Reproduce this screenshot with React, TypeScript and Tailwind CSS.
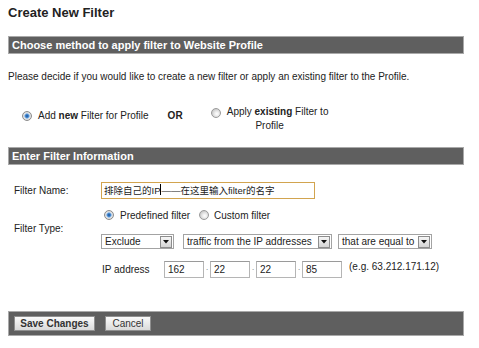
import React from "react";

const Radio = ({ checked }: { checked?: boolean }) =>
  checked ? (
    <span className="inline-block w-[10px] h-[10px] shrink-0 rounded-full border border-[#8c8c8c] bg-[radial-gradient(circle,#1b4f8f_0,#3f83cc_1.5px,#9ec3ea_2.5px,#e6e6e6_3px,#cfcfcf_5px)] align-[-1px]" />
  ) : (
    <span className="inline-block w-[10px] h-[10px] shrink-0 rounded-full border border-[#9a9a9a] bg-[radial-gradient(circle_at_60%_60%,#ffffff_0,#eeeeee_2px,#cacaca_5px)] align-[-1px]" />
  );

const DropButton = () => (
  <span className="ml-auto mr-px w-[12px] h-[12px] border border-[#8d8d8d] bg-gradient-to-b from-[#f6f6f6] to-[#d4d4d4] flex items-center justify-center">
    <svg width="6" height="4" viewBox="0 0 6 4">
      <path d="M0 0h6L3 3.5z" fill="#111" />
    </svg>
  </span>
);

const Select = ({ value, width }: { value: string; width: string }) => (
  <div className={`${width} h-[15px] border border-[#a3a3a3] bg-white flex items-center pl-[3px] text-[#222]`}>
    <span className="leading-[13px] whitespace-nowrap">{value}</span>
    <DropButton />
  </div>
);

const IpBox = ({ value }: { value: string }) => (
  <div className="w-[40px] h-[17px] border border-[#b5b5b5] border-t-[#9a9a9a] bg-white pl-[3px] leading-[15px]">
    {value}
  </div>
);

const Dot = () => <span className="w-[6px] text-center text-[8px] text-[#666] leading-[17px]">·</span>;

const SectionBar = ({ children, className = "" }: { children: React.ReactNode; className?: string }) => (
  <div className={`h-[18px] bg-[#5f5f5f] border border-[#a9a9a9] text-white font-bold text-[11px] leading-[16px] pl-[3px] ${className}`}>
    {children}
  </div>
);

export default function App() {
  return (
    <div className="w-[479px] h-[348px] bg-white overflow-hidden font-['Liberation_Sans',Arial,'Noto_Sans_CJK_SC',sans-serif] text-[10px] text-[#222]">
      <div className="w-[456px] ml-[8px] pt-[5px]">
        <h1 className="text-[13px] leading-[16px] font-bold text-[#222]">Create New Filter</h1>

        <SectionBar className="mt-[15px]">Choose method to apply filter to Website Profile</SectionBar>

        <p className="mt-[17px] leading-[12px]">
          Please decide if you would like to create a new filter or apply an existing filter to the Profile.
        </p>

        <div className="mt-[23px] flex items-start pl-[14px] leading-[12px]">
          <div className="mt-[4px] flex items-center gap-[6px]">
            <Radio checked />
            <span>
              Add <b>new</b> Filter for Profile
            </span>
          </div>
          <b className="mt-[4px] ml-[19px]">OR</b>
          <div className="ml-[28px] w-[118px] text-center whitespace-nowrap">
            <span className="mr-[6px] inline-block align-[-2px]">
              <Radio />
            </span>
            Apply <b>existing</b> Filter to
            <br />
            Profile
          </div>
        </div>

        <SectionBar className="mt-[15px]">Enter Filter Information</SectionBar>

        <div className="pl-[6px]">
          <div className="mt-[17px] flex items-center">
            <span className="w-[87px]">Filter Name:</span>
            <div className="w-[214px] h-[17px] border border-[#d2a44f] bg-white pl-[2px] leading-[15px] whitespace-nowrap text-[9.5px] font-['Liberation_Sans','Noto_Sans_CJK_SC',sans-serif]">
              排除自己的IP<span className="inline-block w-px h-[11px] bg-black align-[-1px]" />——在这里输入filter的名字
            </div>
          </div>

          <div className="mt-[9px] flex items-center">
            <span className="w-[87px]">Filter Type:</span>
            <div className="flex flex-col gap-[12px]">
              <div className="h-[14px] flex items-center pl-[3px]">
                <Radio checked />
                <span className="ml-[6px]">Predefined filter</span>
                <span className="ml-[9px]">
                  <Radio />
                </span>
                <span className="ml-[5px]">Custom filter</span>
              </div>
              <div className="flex items-center">
                <Select value="Exclude" width="w-[73px]" />
                <div className="w-[9px]" />
                <Select value="traffic from the IP addresses" width="w-[149px]" />
                <div className="w-[6px]" />
                <Select value="that are equal to" width="w-[94px]" />
              </div>
            </div>
          </div>

          <div className="mt-[12px] ml-[88px] flex items-start">
            <span className="w-[62px] leading-[17px]">IP address</span>
            <IpBox value="162" />
            <Dot />
            <IpBox value="22" />
            <Dot />
            <IpBox value="22" />
            <Dot />
            <IpBox value="85" />
            <span className="ml-[7px] leading-[12px]">(e.g. 63.212.171.12)</span>
          </div>
        </div>

        <div className="mt-[33px] h-[25px] bg-[#5f5f5f] border border-[#a9a9a9] flex items-center pl-[5px] gap-[10px]">
          <button className="w-[81px] h-[15px] border border-[#8f8f8f] bg-gradient-to-b from-[#fafafa] to-[#dadada] text-[10px] font-bold leading-[13px] text-[#333]">
            Save Changes
          </button>
          <button className="w-[46px] h-[15px] border border-[#8f8f8f] bg-gradient-to-b from-[#fafafa] to-[#dadada] text-[10px] leading-[13px] text-[#333]">
            Cancel
          </button>
        </div>
      </div>
    </div>
  );
}
